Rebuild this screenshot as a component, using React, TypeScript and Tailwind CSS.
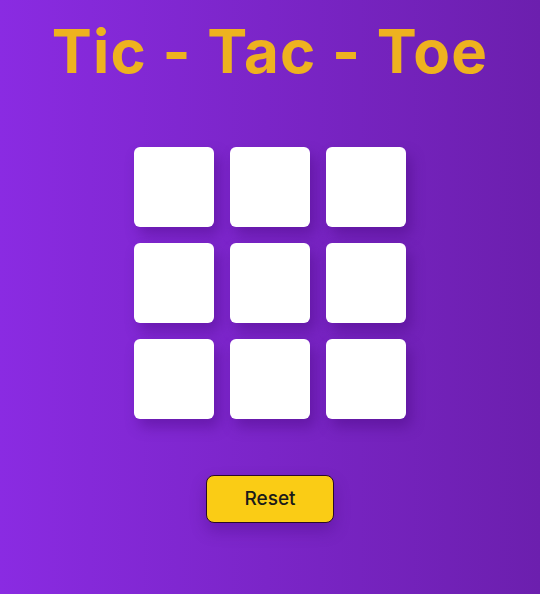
export default function App() {
  const cells = Array.from({ length: 9 });
  return (
    <div
      className="w-[540px] h-[594px] flex flex-col items-center bg-gradient-to-r from-[#8a2be2] to-[#6c1fae]"
      style={{ fontFamily: '"Inter", "Noto Sans", sans-serif' }}
    >
      <h1
        className="mt-[11px] text-[60px] leading-[80px] font-bold text-[#eeb21f] tracking-[1.2px]"
        style={{ fontFamily: '"Inter", "Noto Sans", sans-serif' }}
      >
        Tic - Tac - Toe
      </h1>
      <div className="mt-[56px] grid grid-cols-3 gap-[16px]">
        {cells.map((_, i) => (
          <div
            key={i}
            className="w-[80px] h-[80px] rounded-[6px] bg-white shadow-[5px_8px_14px_rgba(60,0,110,0.35)]"
          />
        ))}
      </div>
      <button className="mt-[56px] w-[128px] h-[48px] rounded-[8px] border border-[#2a0a2a] bg-[#facc15] text-[19px] font-medium text-[#1a1a1a] shadow-[0_8px_16px_rgba(60,0,110,0.3)]">
        Reset
      </button>
    </div>
  );
}
